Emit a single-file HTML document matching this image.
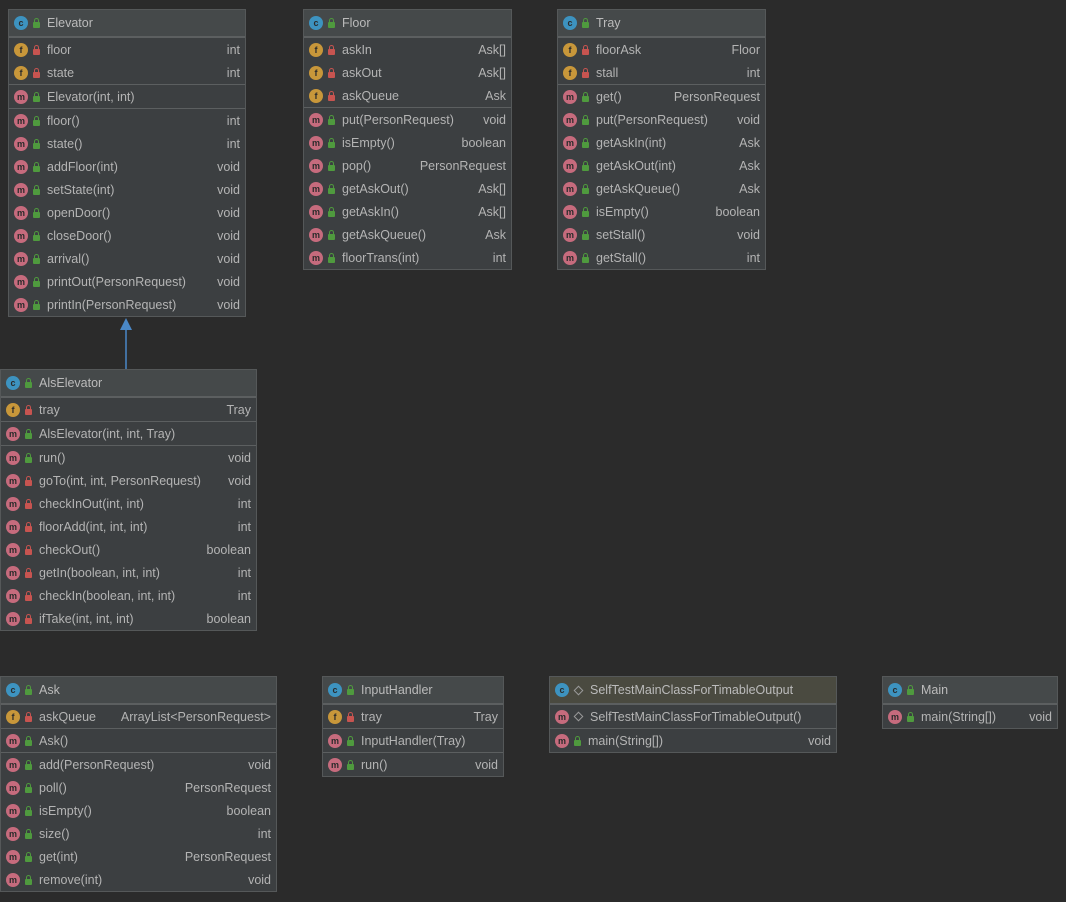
<!DOCTYPE html>
<html><head><meta charset="utf-8"><style>
body{margin:0;width:1066px;height:902px;background:#2b2b2b;position:relative;overflow:hidden;font-family:"Liberation Sans",sans-serif;font-size:12.5px;color:#bbbbbb}
.b{position:absolute;background:#3c3f41;border:1px solid #555859;box-sizing:border-box}
.h{height:26px;background:#45494a;display:flex;align-items:center;border-bottom:1px solid #5c5f60}
.s{border-top:1px solid #5c5f60}
.s:first-of-type{border-top:none}
.r{height:23px;display:flex;align-items:center;white-space:nowrap;color:#b4b4b4}
.i{width:14px;height:14px;border-radius:50%;margin-left:5px;flex:none;font-size:9px;line-height:14px;text-align:center;color:#2b2b2b;font-weight:bold}
.c{background:#3d93c0}.f{background:#c8973a}.m{background:#c66b7d}
.l{width:7px;height:6px;margin:0 7px 0 5px;flex:none;border-radius:1px;position:relative;top:2px}
.l::before{content:"";position:absolute;left:1px;top:-4px;width:3px;height:3px;border:1px solid currentColor;border-bottom:none;border-radius:3px 3px 0 0}
.pr{background:#c75450;color:#c75450}.pu{background:#4f9a3e;color:#4f9a3e}
.pk{width:5px;height:5px;border:1px solid #999;transform:rotate(45deg);margin:0 8px 0 6px;flex:none}
.n{flex:1}.t{margin-right:5px}
</style></head><body>
<svg style="position:absolute;left:0;top:0" width="1066" height="902"><line x1="126" y1="326" x2="126" y2="369" stroke="#4a88c7" stroke-width="1.5"/><polygon points="126,318 120,330 132,330" fill="#4a88c7"/></svg>
<div id="root"></div>
<script>
const B=[
[8,9,238,"Elevator","pu",[[["f","pr","floor","int"],["f","pr","state","int"]],[["m","pu","Elevator(int, int)",""]],[["m","pu","floor()","int"],["m","pu","state()","int"],["m","pu","addFloor(int)","void"],["m","pu","setState(int)","void"],["m","pu","openDoor()","void"],["m","pu","closeDoor()","void"],["m","pu","arrival()","void"],["m","pu","printOut(PersonRequest)","void"],["m","pu","printIn(PersonRequest)","void"]]]],
[303,9,209,"Floor","pu",[[["f","pr","askIn","Ask[]"],["f","pr","askOut","Ask[]"],["f","pr","askQueue","Ask"]],[["m","pu","put(PersonRequest)","void"],["m","pu","isEmpty()","boolean"],["m","pu","pop()","PersonRequest"],["m","pu","getAskOut()","Ask[]"],["m","pu","getAskIn()","Ask[]"],["m","pu","getAskQueue()","Ask"],["m","pu","floorTrans(int)","int"]]]],
[557,9,209,"Tray","pu",[[["f","pr","floorAsk","Floor"],["f","pr","stall","int"]],[["m","pu","get()","PersonRequest"],["m","pu","put(PersonRequest)","void"],["m","pu","getAskIn(int)","Ask"],["m","pu","getAskOut(int)","Ask"],["m","pu","getAskQueue()","Ask"],["m","pu","isEmpty()","boolean"],["m","pu","setStall()","void"],["m","pu","getStall()","int"]]]],
[0,369,257,"AlsElevator","pu",[[["f","pr","tray","Tray"]],[["m","pu","AlsElevator(int, int, Tray)",""]],[["m","pu","run()","void"],["m","pr","goTo(int, int, PersonRequest)","void"],["m","pr","checkInOut(int, int)","int"],["m","pr","floorAdd(int, int, int)","int"],["m","pr","checkOut()","boolean"],["m","pr","getIn(boolean, int, int)","int"],["m","pr","checkIn(boolean, int, int)","int"],["m","pr","ifTake(int, int, int)","boolean"]]]],
[0,676,277,"Ask","pu",[[["f","pr","askQueue","ArrayList&lt;PersonRequest&gt;"]],[["m","pu","Ask()",""]],[["m","pu","add(PersonRequest)","void"],["m","pu","poll()","PersonRequest"],["m","pu","isEmpty()","boolean"],["m","pu","size()","int"],["m","pu","get(int)","PersonRequest"],["m","pu","remove(int)","void"]]]],
[322,676,182,"InputHandler","pu",[[["f","pr","tray","Tray"]],[["m","pu","InputHandler(Tray)",""]],[["m","pu","run()","void"]]]],
[549,676,288,"SelfTestMainClassForTimableOutput","pk",[[["m","pk","SelfTestMainClassForTimableOutput()",""]],[["m","pu","main(String[])","void"]]],1],
[882,676,176,"Main","pu",[[["m","pu","main(String[])","void"]]]]];
const acc=a=>a=="pk"?'<span class="pk"></span>':`<span class="l ${a}"></span>`;
let h="";
for(const [x,y,w,name,a,secs,olive] of B){
 h+=`<div class="b" style="left:${x}px;top:${y}px;width:${w}px"><div class="h"${olive?' style="background:#4a4a40"':''}><span class="i c">c</span>${acc(a)}<span class="n">${name}</span></div>`;
 for(const s of secs){h+='<div class="s">';for(const [k,ac,n,t] of s)h+=`<div class="r"><span class="i ${k}">${k}</span>${acc(ac)}<span class="n">${n}</span><span class="t">${t}</span></div>`;h+='</div>';}
 h+='</div>';
}
document.getElementById("root").innerHTML=h;
</script>
</body></html>
